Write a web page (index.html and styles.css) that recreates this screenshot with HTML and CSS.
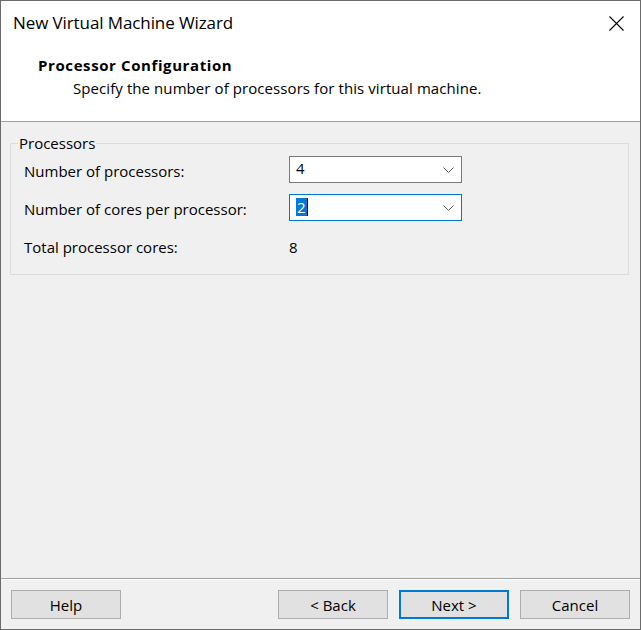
FILE: index.html
```html
<!DOCTYPE html>
<html>
<head>
<meta charset="utf-8">
<title>New Virtual Machine Wizard</title>
<link rel="stylesheet" href="styles.css">
</head>
<body>
<div class="window">
  <div class="header">
    <div class="title-row">
      <span class="title">New Virtual Machine Wizard</span>
      <svg class="close" width="15" height="15" viewBox="0 0 15 15"><path d="M0.5 0.5 L14.5 14.5 M14.5 0.5 L0.5 14.5" stroke="#000" stroke-width="1.1" fill="none"/></svg>
    </div>
    <div class="page-title">Processor Configuration</div>
    <div class="page-sub">Specify the number of processors for this virtual machine.</div>
  </div>
  <div class="body">
    <fieldset class="group">
      <legend>Processors</legend>
      <div class="rows">
        <div class="row">
          <span class="label">Number of processors:</span>
          <div class="combo"><span class="value">4</span><svg class="chev" width="11" height="6" viewBox="0 0 11 6"><polyline points="0.5,0.5 5.5,5.5 10.5,0.5" stroke="#5a5a5a" fill="none"/></svg></div>
        </div>
        <div class="row">
          <span class="label">Number of cores per processor:</span>
          <div class="combo focused"><span class="value"><span class="sel">2</span><span class="caret"></span></span><svg class="chev" width="11" height="6" viewBox="0 0 11 6"><polyline points="0.5,0.5 5.5,5.5 10.5,0.5" stroke="#5a5a5a" fill="none"/></svg></div>
        </div>
        <div class="row total">
          <span class="label">Total processor cores:</span>
          <span class="total-val">8</span>
        </div>
      </div>
    </fieldset>
  </div>
  <div class="footer">
    <button class="btn">Help</button>
    <div class="spacer"></div>
    <button class="btn">&lt; Back</button>
    <button class="btn default">Next &gt;</button>
    <button class="btn">Cancel</button>
  </div>
</div>
</body>
</html>
```
FILE: styles.css
```css
html, body {
  margin: 0;
  padding: 0;
  background: #f0f0f0;
}
body {
  font-family: "Open Sans", "Noto Sans", sans-serif;
  font-size: 15px;
  color: #000;
}
.window {
  width: 641px;
  height: 630px;
  box-sizing: border-box;
  border: 1px solid #6b6b6b;
  background: #f0f0f0;
  display: flex;
  flex-direction: column;
}
.header {
  background: #fff;
  height: 110px;
  border-bottom: 1px solid #a0a0a0;
  padding: 10px 16px 0 12px;
  box-sizing: content-box;
}
.title-row {
  display: flex;
  align-items: center;
  justify-content: space-between;
  height: 24px;
}
.title {
  font-size: 17px;
  line-height: 24px;
  letter-spacing: -0.1px;
}
.close {
  display: block;
}
.page-title {
  margin-top: 20px;
  margin-left: 25px;
  font-weight: bold;
  line-height: 20px;
  letter-spacing: 0.6px;
}
.page-sub {
  margin-top: 3px;
  margin-left: 60px;
  line-height: 20px;
  letter-spacing: 0.08px;
}
.body {
  flex: 1;
  padding: 11px 11px 0 9px;
}
.group {
  margin: 0;
  border: 1px solid #dcdcdc;
  padding: 3px 0 17px 7px;
  min-inline-size: 0;
}
.group legend {
  padding: 0 1px;
  line-height: 20px;
}
.rows {
  padding-left: 6px;
  display: flex;
  flex-direction: column;
}
.row {
  display: flex;
  align-items: flex-start;
  height: 27px;
}
.row + .row {
  margin-top: 11px;
}
.row.total {
  margin-top: 16px;
  height: 20px;
}
.label {
  width: 265px;
  line-height: 20px;
  padding-top: 5px;
}
.row.total .label {
  padding-top: 0;
}
.total-val {
  line-height: 20px;
}
.combo {
  width: 173px;
  height: 27px;
  box-sizing: border-box;
  border: 1px solid #7a7a7a;
  background: #fff;
  display: flex;
  align-items: center;
  justify-content: space-between;
  padding: 0 7px 0 6px;
}
.combo.focused {
  border-color: #0078d7;
}
.value {
  line-height: 23px;
  padding-bottom: 2px;
  display: flex;
  align-items: center;
}
.sel {
  background: #0078d7;
  color: #fff;
  line-height: 18px;
  padding: 0 1px;
}
.caret {
  display: inline-block;
  width: 1px;
  height: 18px;
  background: #000;
}
.chev {
  display: block;
}
.footer {
  border-top: 1px solid #a0a0a0;
  box-shadow: inset 0 1px 0 #fff;
  padding: 11px 10px 10px 10px;
  display: flex;
  gap: 11px;
}
.spacer {
  flex: 1;
}
.btn {
  width: 110px;
  height: 29px;
  box-sizing: border-box;
  background: #e1e1e1;
  border: 1px solid #adadad;
  font-family: "Open Sans", "Noto Sans", sans-serif;
  font-size: 15px;
  color: #000;
  padding: 0;
  margin: 0;
  line-height: 20px;
}
.btn.default {
  border: 2px solid #0078d7;
}
```
